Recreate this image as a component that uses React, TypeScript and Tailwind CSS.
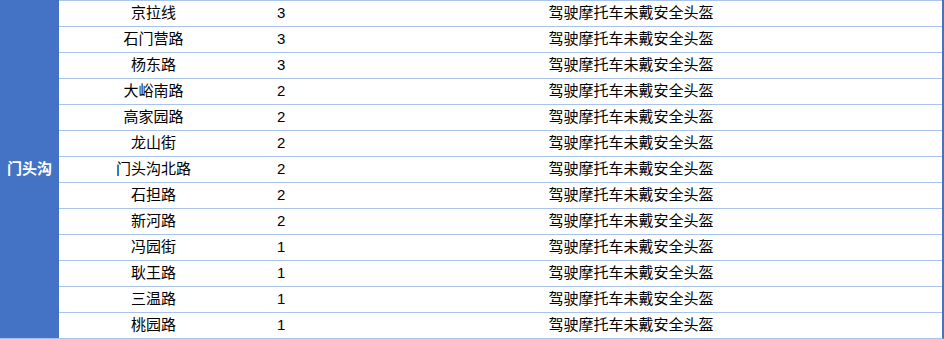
const rows: [string, number][] = [
  ["京拉线", 3],
  ["石门营路", 3],
  ["杨东路", 3],
  ["大峪南路", 2],
  ["高家园路", 2],
  ["龙山街", 2],
  ["门头沟北路", 2],
  ["石担路", 2],
  ["新河路", 2],
  ["冯园街", 1],
  ["耿王路", 1],
  ["三温路", 1],
  ["桃园路", 1],
]

const App = () => {
  return (
    <div
      className="w-[944px] h-[339px] bg-white text-black text-[15px] overflow-hidden"
      style={{ fontFamily: '"Liberation Sans", "Noto Sans CJK SC", sans-serif' }}
    >
      <div className="flex border-b border-b-[#a9c4eb] border-r-2 border-r-[#4472c4]">
        <div className="w-[59px] shrink-0 bg-[#4472c4] text-white font-bold flex items-center justify-center">
          门头沟
        </div>
        <div className="flex-1">
          {rows.map(([road, count]) => (
            <div key={road} className="flex h-[26px] border-t border-[#a9c4eb] items-center">
              <div className="w-[189px] text-center">{road}</div>
              <div className="w-[72px] pl-[29px]">{count}</div>
              <div className="flex-1 text-center">驾驶摩托车未戴安全头盔</div>
            </div>
          ))}
        </div>
      </div>
    </div>
  )
}

export default App
